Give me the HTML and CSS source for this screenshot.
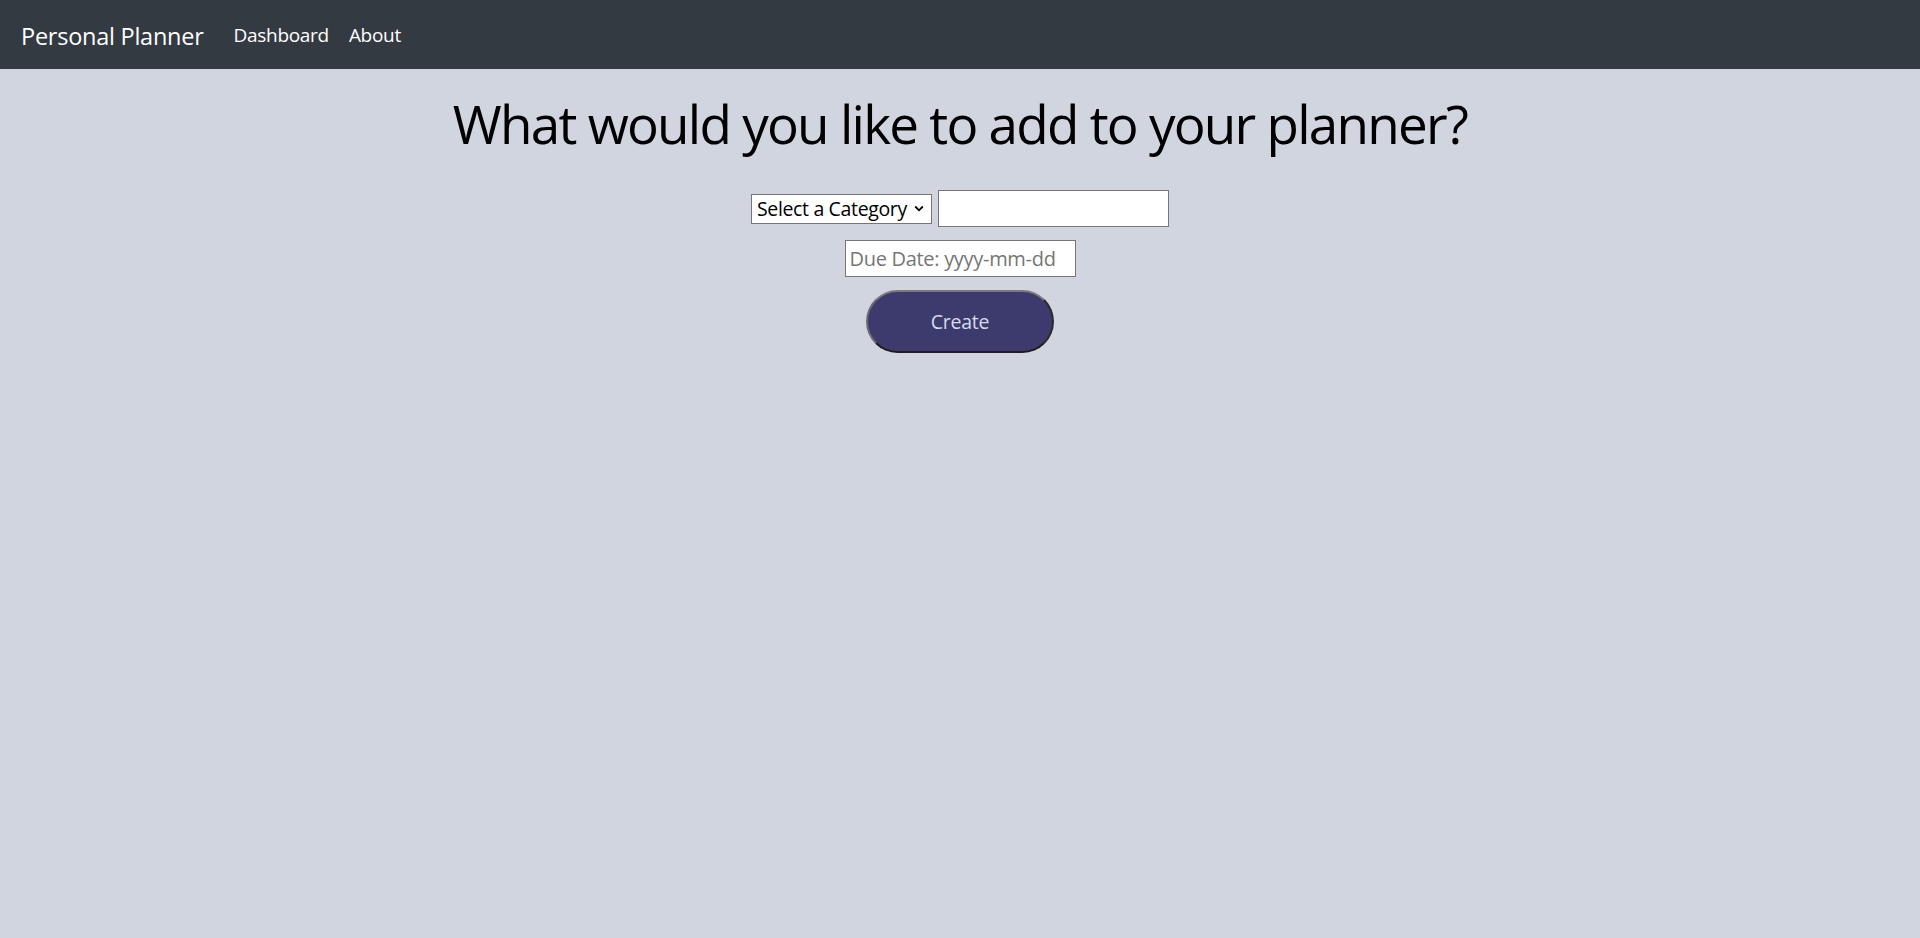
FILE: index.html
```html
<!DOCTYPE html>
<html lang="en">
<head>
<meta charset="utf-8">
<title>Personal Planner</title>
<link rel="stylesheet" href="styles.css">
</head>
<body>
<nav class="navbar">
  <a class="brand" href="#">Personal Planner</a>
  <a class="nav-link" href="#">Dashboard</a>
  <a class="nav-link" href="#">About</a>
</nav>
<main class="main">
  <h1 class="title">What would you like to add to your planner?</h1>
  <form class="form">
    <div class="row">
      <span class="select-wrap">
        <select class="select">
          <option>Select a Category</option>
        </select>
        <svg class="chevron" width="10" height="7" viewBox="0 0 10 7"><path d="M1.2 1.5l3.8 3.8 3.8-3.8" fill="none" stroke="#000" stroke-width="1.8"/></svg>
      </span>
      <input class="text-input" type="text">
    </div>
    <input class="text-input" type="text" placeholder="Due Date: yyyy-mm-dd">
    <button class="create-btn" type="button">Create</button>
  </form>
</main>
</body>
</html>
```
FILE: styles.css
```css
html, body {
  margin: 0;
  padding: 0;
}
body {
  background: #d1d5df;
  font-family: "Open Sans", "Noto Sans", sans-serif;
  min-height: 938px;
}
.navbar {
  height: 69px;
  background: #343a42;
  display: flex;
  align-items: center;
  padding: 0 21px;
  box-sizing: border-box;
}
.brand {
  color: #fff;
  text-decoration: none;
  font-size: 23.5px;
  margin-right: 20px;
  padding-top: 2px;
  letter-spacing: -0.25px;
}
.nav-link {
  color: #fff;
  text-decoration: none;
  font-size: 19px;
  padding: 0 10px;
  letter-spacing: -0.3px;
}
.main {
  display: flex;
  flex-direction: column;
  align-items: center;
}
.title {
  margin: 21px 0 0;
  font-size: 53px;
  font-weight: 500;
  line-height: 67px;
  color: #000;
  letter-spacing: -1.75px;
}
.form {
  display: flex;
  flex-direction: column;
  align-items: center;
  margin-top: 33px;
  gap: 13px;
}
.row {
  display: flex;
  align-items: center;
  gap: 6px;
}
.select-wrap {
  position: relative;
  display: inline-block;
}
.select {
  appearance: none;
  -webkit-appearance: none;
  width: 181px;
  height: 30px;
  box-sizing: border-box;
  border: 1px solid #767676;
  border-radius: 0;
  background: #fff;
  font-family: "Open Sans", "Noto Sans", sans-serif;
  font-size: 19.5px;
  color: #000;
  padding: 0 0 0 5px;
  letter-spacing: -0.35px;
  display: block;
}
.chevron {
  position: absolute;
  right: 8px;
  top: 11px;
  pointer-events: none;
}
.text-input {
  width: 231px;
  height: 37px;
  box-sizing: border-box;
  border: 1px solid #767676;
  border-radius: 0;
  background: #fff;
  font-family: "Open Sans", "Noto Sans", sans-serif;
  font-size: 20px;
  padding: 0 4px;
  letter-spacing: -0.3px;
}
.text-input::placeholder {
  color: #767676;
}
.create-btn {
  width: 188px;
  height: 63px;
  border-radius: 32px;
  background: #3d3b6e;
  border: 2px solid;
  border-color: #7a7a80 #2a2a2a #1e1e1e #6a6a70;
  color: #d4dbea;
  font-family: "Open Sans", "Noto Sans", sans-serif;
  font-size: 19.5px;
  letter-spacing: -0.2px;
  cursor: pointer;
}
```
